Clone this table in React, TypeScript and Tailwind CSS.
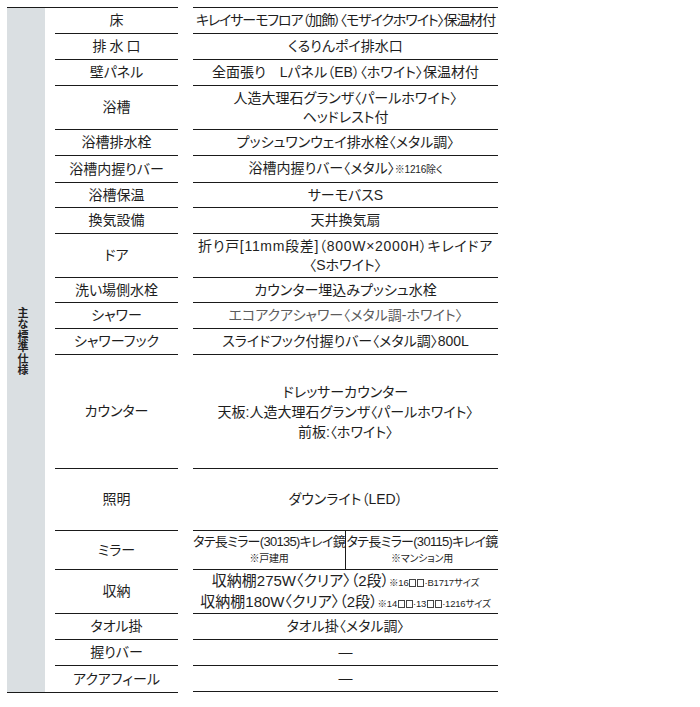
import type { ReactNode } from 'react';

type Row = {
  label: string;
  h: number;
  value: ReactNode;
  labelClass?: string;
  valueClass?: string;
  split?: boolean;
};

const Note = ({ children, className = 'text-[10px]' }: { children: ReactNode; className?: string }) => (
  <span className={`${className} tracking-[-0.2px]`}>{children}</span>
);

// 小さな四角（□）
const Box = () => <span className="mx-[0.5px] inline-block h-[8px] w-[7px] border border-[#444] align-[-1px]" />;

const rows: Row[] = [
  { label: '床', h: 26, value: 'キレイサーモフロア（加飾）〈モザイクホワイト〉保温材付', valueClass: 'tracking-[-1.1px]' },
  { label: '排水口', h: 26, value: 'くるりんポイ排水口', labelClass: 'tracking-[3px] pl-[3px]' },
  { label: '壁パネル', h: 26, value: '全面張り　Lパネル（EB）〈ホワイト〉保温材付' },
  {
    label: '浴槽',
    h: 44,
    value: (
      <>
        人造大理石グランザ〈パールホワイト〉
        <br />
        ヘッドレスト付
      </>
    ),
  },
  { label: '浴槽排水栓', h: 26, value: 'プッシュワンウェイ排水栓〈メタル調〉' },
  {
    label: '浴槽内握りバー',
    h: 27,
    value: (
      <>
        浴槽内握りバー〈メタル〉<Note>※1216除く</Note>
      </>
    ),
  },
  { label: '浴槽保温', h: 25, value: 'サーモバスS' },
  { label: '換気設備', h: 26, value: '天井換気扇' },
  {
    label: 'ドア',
    h: 44,
    value: (
      <>
        <span className="tracking-[0.7px]">折り戸[11mm段差]（800W×2000H）キレイドア</span>
        <br />
        〈Sホワイト〉
      </>
    ),
  },
  { label: '洗い場側水栓', h: 25, value: 'カウンター埋込みプッシュ水栓' },
  { label: 'シャワー', h: 26, value: 'エコアクアシャワー〈メタル調-ホワイト〉', valueClass: 'text-[#5c5c5c]' },
  { label: 'シャワーフック', h: 26, value: 'スライドフック付握りバー〈メタル調〉800L' },
  {
    label: 'カウンター',
    h: 114,
    value: (
      <span className="leading-[20px]">
        ドレッサーカウンター
        <br />
        天板:人造大理石グランザ〈パールホワイト〉
        <br />
        前板:〈ホワイト〉
      </span>
    ),
  },
  { label: '照明', h: 62, value: 'ダウンライト（LED）' },
  { label: 'ミラー', h: 39, value: null, split: true },
  {
    label: '収納',
    h: 44,
    value: (
      <span className="text-[15px] leading-[19px]">
        収納棚275W〈クリア〉（2段）
        <Note className="text-[9.5px]">
          ※16<Box />
          <Box />·B1717サイズ
        </Note>
        <br />
        収納棚180W〈クリア〉（2段）
        <Note className="text-[9.5px]">
          ※14<Box />
          <Box />·13<Box />
          <Box />·1216サイズ
        </Note>
      </span>
    ),
  },
  { label: 'タオル掛', h: 26, value: 'タオル掛〈メタル調〉' },
  { label: '握りバー', h: 26, value: '―' },
  { label: 'アクアフィール', h: 26, value: '―' },
];

const Mirror = () => (
  <div className="grid h-full grid-cols-[153px_152px]">
    <div className="flex flex-col items-center justify-center whitespace-nowrap border-r border-[#1a1a1a] leading-[17px]">
      <span className="text-[13px] tracking-[-0.7px]">タテ長ミラー(30135)キレイ鏡</span>
      <Note>※戸建用</Note>
    </div>
    <div className="flex flex-col items-center justify-center whitespace-nowrap leading-[17px]">
      <span className="text-[13px] tracking-[-0.7px]">タテ長ミラー(30115)キレイ鏡</span>
      <Note>※マンション用</Note>
    </div>
  </div>
);

export default function App() {
  return (
    <div className="min-h-[707px] w-[700px] bg-white pl-[7px] pt-[7px] font-['Liberation_Sans','Noto_Sans_CJK_JP',sans-serif] text-[14px] text-[#1e1e1e] [font-feature-settings:'palt']">
      <div className="flex items-start">
        {/* 左：見出し帯＋項目名 */}
        <div className="flex w-[171px] border-y border-[#1a1a1a]">
          <div className="flex w-[38px] items-center justify-center bg-[#dadfe2] pb-[18px] pr-[6px]">
            <span className="font-['Noto_Sans_CJK_JP',sans-serif] text-[11px] font-bold leading-[12px] tracking-[0.5px] text-[#222] [writing-mode:vertical-rl]">
              主な標準仕様
            </span>
          </div>
          <div className="ml-[10px] w-[123px]">
            {rows.map((r, i) => (
              <div
                key={r.label}
                style={{ height: r.h }}
                className={`flex items-center justify-center whitespace-nowrap ${
                  i < rows.length - 1 ? 'border-b border-[#1a1a1a]' : ''
                } ${r.labelClass ?? ''}`}
              >
                {r.label}
              </div>
            ))}
          </div>
        </div>

        {/* 右：仕様 */}
        <div className="ml-[15px] w-[305px] border-t border-[#1a1a1a]">
          {rows.map((r) => (
            <div
              key={r.label}
              style={{ height: r.h }}
              className={`border-b border-[#1a1a1a] ${r.valueClass ?? ''}`}
            >
              {r.split ? (
                <Mirror />
              ) : (
                <div className="flex h-full items-center justify-center whitespace-nowrap text-center leading-[19px]">
                  <span>{r.value}</span>
                </div>
              )}
            </div>
          ))}
        </div>
      </div>
    </div>
  );
}
